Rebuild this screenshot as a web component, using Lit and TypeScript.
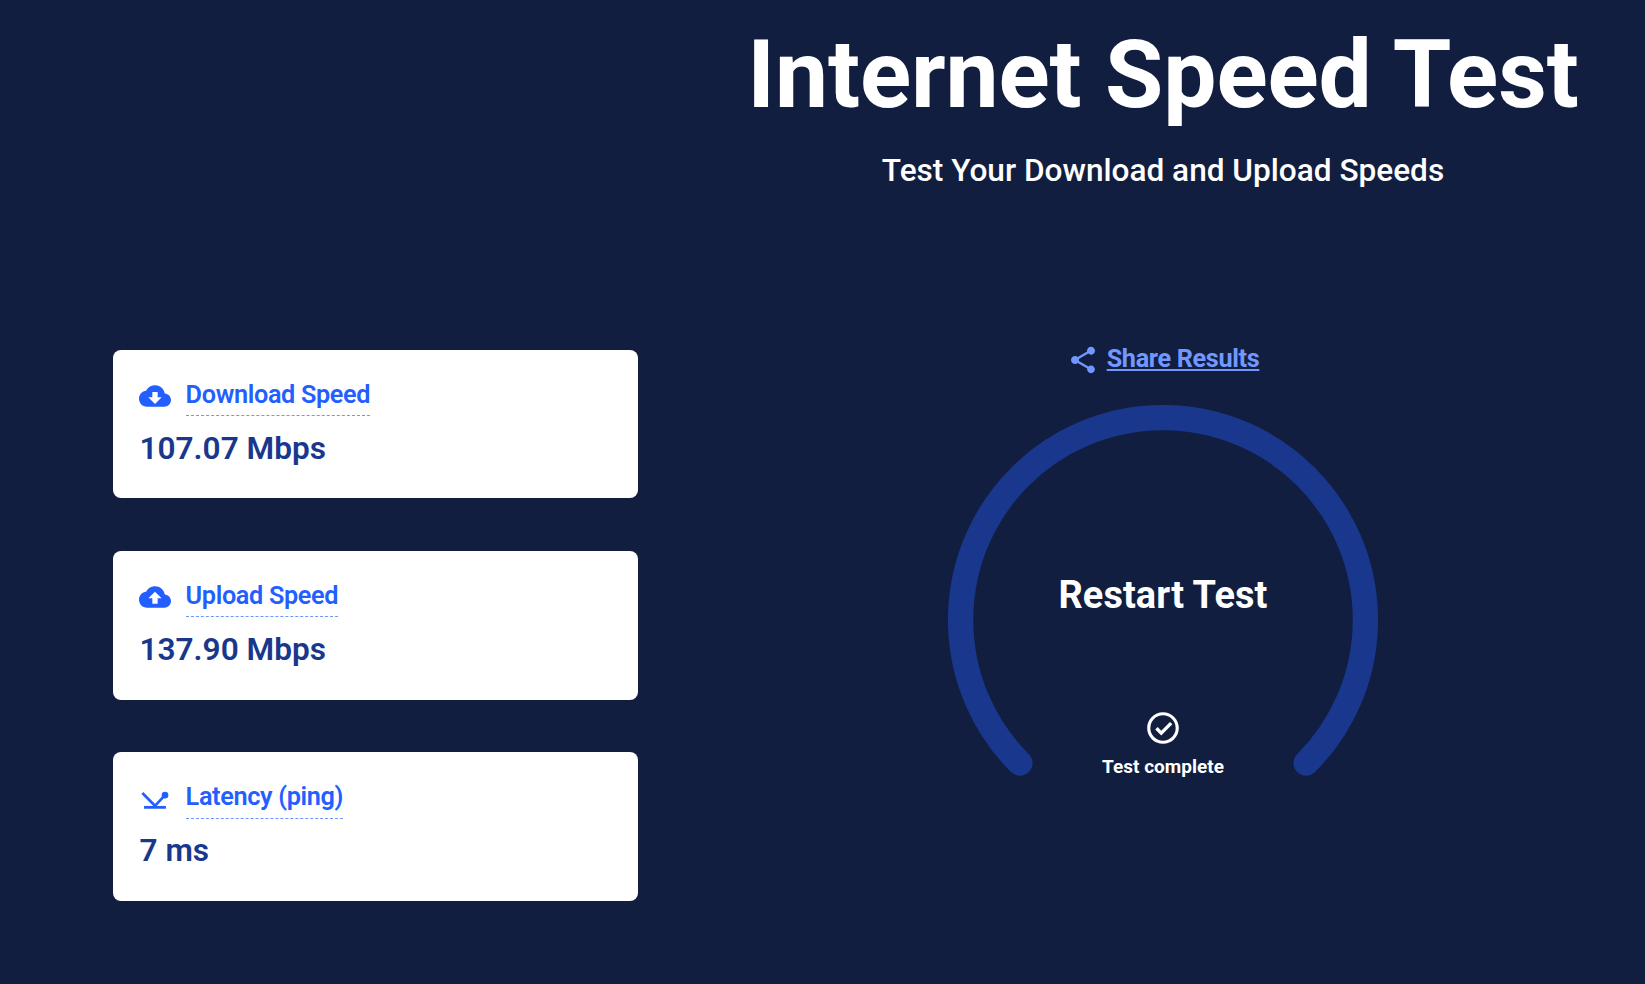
import { LitElement, html, css, svg } from "lit";
import { customElement, property } from "lit/decorators.js";

const CLOUD =
  "M19.35 10.04C18.67 6.59 15.64 4 12 4 9.11 4 6.6 5.64 5.35 8.04 2.34 8.36 0 10.91 0 14c0 3.31 2.69 6 6 6h13c2.76 0 5-2.24 5-5 0-2.64-2.05-4.78-4.65-4.96z";

const ICONS: Record<string, unknown> = {
  download: svg`<path fill-rule="evenodd" d="${CLOUD}M10 9h4v4h3L12 18l-5-5h3z"/>`,
  upload: svg`<path fill-rule="evenodd" d="${CLOUD}M10 17h4v-4h3L12 8l-5 5h3z"/>`,
  latency: svg`<path d="M3.8 17.2h16.4V19.3H3.8z"/><path fill="none" stroke="currentColor" stroke-width="2" d="M2.5 7.5L12 17.1L19.5 9.1"/><circle cx="19.5" cy="9.1" r="2.5"/>`,
};

@customElement("metric-card")
export class MetricCard extends LitElement {
  @property() icon = "";
  @property() label = "";
  @property() value = "";

  static styles = css`
    :host {
      display: block;
      box-sizing: border-box;
      height: 148.95px;
      padding: 26.5px 27px 0;
      border-radius: 8px;
      background: #fff;
    }
    .head {
      display: flex;
      align-items: flex-start;
      gap: 14.6px;
      height: 41px;
      color: #235eff;
    }
    .icon {
      width: 32px;
      height: 32px;
      margin: 4.4px 0 0 -1px;
      fill: currentColor;
      flex: none;
    }
    .label {
      padding-bottom: 1.36px;
      font-size: 25.26px;
      line-height: 38px;
      font-weight: 600;
      letter-spacing: -0.34px;
      border-bottom: 1px dashed #6f95ff;
    }
    .value {
      margin: 13px 0 0 -0.5px;
      font-size: 31.58px;
      line-height: 38px;
      font-weight: 600;
      color: #19378c;
    }
  `;

  render() {
    return html`
      <div class="head">
        <svg class="icon" viewBox="0 0 24 24">${ICONS[this.icon]}</svg>
        <span class="label">${this.label}</span>
      </div>
      <div class="value">${this.value}</div>
    `;
  }
}

@customElement("app-root")
export class AppRoot extends LitElement {
  static styles = css`
    :host {
      display: grid;
      grid-template-columns: 681px 964px;
      width: 1645px;
      height: 984px;
      overflow: hidden;
      background: #111e3f;
      color: #fff;
      font-family: Roboto, sans-serif;
    }
    .cards {
      display: flex;
      flex-direction: column;
      gap: 52.16px;
      padding: 349.5px 43px 0 113px;
    }
    .main {
      display: flex;
      flex-direction: column;
      align-items: center;
    }
    .title {
      margin: 19px 0 0;
      font-size: 94.74px;
      line-height: 112px;
      font-weight: 700;
      letter-spacing: -0.1px;
      white-space: nowrap;
    }
    .subtitle {
      margin: 21px 0 0;
      font-size: 31.58px;
      line-height: 38px;
      font-weight: 500;
    }
    .share {
      display: flex;
      align-items: center;
      gap: 8px;
      margin-top: 150px;
      height: 38px;
      color: #7298ff;
      font-size: 25.26px;
      font-weight: 700;
      letter-spacing: -0.35px;
    }
    .share-icon {
      width: 32px;
      height: 32px;
      margin-top: 2px;
      fill: currentColor;
    }
    .share-text {
      margin-top: -2px;
      text-decoration: underline;
      text-decoration-thickness: 2px;
      text-underline-offset: 2px;
      text-decoration-skip-ink: none;
    }
    .gauge {
      display: grid;
      width: 430px;
      height: 430px;
      margin-top: 27px;
    }
    .gauge > * {
      grid-area: 1 / 1;
    }
    .status {
      display: flex;
      flex-direction: column;
      align-items: center;
      padding-top: 168px;
    }
    .restart {
      font-size: 37.9px;
      line-height: 45px;
      font-weight: 700;
      letter-spacing: 0.1px;
    }
    .check {
      width: 38px;
      height: 38px;
      margin-top: 91px;
      fill: #fff;
    }
    .complete {
      margin-top: 8px;
      font-size: 19px;
      line-height: 24px;
      font-weight: 700;
    }
  `;

  render() {
    return html`
      <div class="cards">
        <metric-card icon="download" label="Download Speed" value="107.07 Mbps"></metric-card>
        <metric-card icon="upload" label="Upload Speed" value="137.90 Mbps"></metric-card>
        <metric-card icon="latency" label="Latency (ping)" value="7 ms"></metric-card>
      </div>
      <main class="main">
        <h1 class="title">Internet Speed Test</h1>
        <p class="subtitle">Test Your Download and Upload Speeds</p>
        <div class="share">
          <svg class="share-icon" viewBox="0 0 24 24">
            <path d="M18 16.08c-.76 0-1.44.3-1.96.77L8.91 12.7c.05-.23.09-.46.09-.7s-.04-.47-.09-.7l7.05-4.11c.54.5 1.25.81 2.04.81 1.66 0 3-1.34 3-3s-1.34-3-3-3-3 1.34-3 3c0 .24.04.47.09.7L8.04 9.81C7.5 9.31 6.79 9 6 9c-1.66 0-3 1.34-3 3s1.34 3 3 3c.79 0 1.5-.31 2.04-.81l7.12 4.16c-.05.21-.08.43-.08.65 0 1.61 1.31 2.92 2.92 2.92s2.92-1.31 2.92-2.92-1.31-2.92-2.92-2.92z"/>
          </svg>
          <span class="share-text">Share Results</span>
        </div>
        <div class="gauge">
          <svg viewBox="0 0 430 430">
            <path d="M71.9 358.1A202.4 202.4 0 1 1 358.1 358.1" fill="none" stroke="#19378c" stroke-width="25.3" stroke-linecap="round"/>
          </svg>
          <div class="status">
            <span class="restart">Restart Test</span>
            <svg class="check" viewBox="0 0 24 24">
              <path d="M12 2C6.48 2 2 6.48 2 12s4.48 10 10 10 10-4.48 10-10S17.52 2 12 2zm0 18a8 8 0 1 1 0-16 8 8 0 0 1 0 16zM16.4 8.2L10.9 13.7l-2.3-2.3-1.5 1.5 3.8 3.8 7-7z"/>
            </svg>
            <span class="complete">Test complete</span>
          </div>
        </div>
      </main>
    `;
  }
}
